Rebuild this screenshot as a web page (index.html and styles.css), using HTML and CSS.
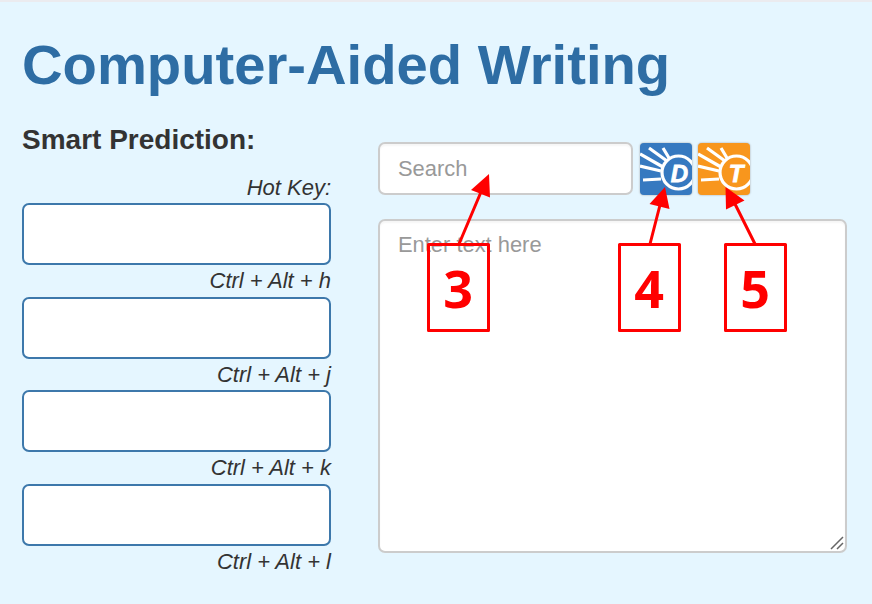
FILE: index.html
```html
<!DOCTYPE html>
<html lang="en">
<head>
<meta charset="utf-8">
<title>Computer-Aided Writing</title>
<link rel="stylesheet" href="styles.css">
</head>
<body>
<main class="page">
  <h1 class="title">Computer-Aided Writing</h1>
  <div class="columns">
    <section class="predictions">
      <h2 class="heading">Smart Prediction:</h2>
      <div class="hotkey first">Hot Key:</div>
      <div class="slot"></div>
      <div class="hotkey">Ctrl + Alt + h</div>
      <div class="slot"></div>
      <div class="hotkey">Ctrl + Alt + j</div>
      <div class="slot"></div>
      <div class="hotkey">Ctrl + Alt + k</div>
      <div class="slot"></div>
      <div class="hotkey">Ctrl + Alt + l</div>
    </section>
    <section class="editor">
      <div class="search-row">
        <div class="field search">Search</div>
        <svg class="lookup dictionary" viewBox="0 0 52 52">
          <g class="rays">
            <path d="M0 11 23 24M9 5 27 18M23 5 29 15M0 23 21 28M3 37 21 36"/>
            <circle cx="38.500" cy="29.500" r="16.500"/>
          </g>
          <text x="39.500" y="38.500">D</text>
        </svg>
        <svg class="lookup thesaurus" viewBox="0 0 52 52">
          <g class="rays">
            <path d="M0 11 23 24M9 5 27 18M23 5 29 15M0 23 21 28M3 37 21 36"/>
            <circle cx="38.500" cy="29.500" r="16.500"/>
          </g>
          <text x="38" y="38.500">T</text>
        </svg>
      </div>
      <div class="field writing">Enter text here
        <svg class="grip" viewBox="0 0 14 14"><path d="M1 13 13 1M7 13 13 7"/></svg>
      </div>
    </section>
  </div>
</main>
<svg class="callouts" viewBox="0 0 872 604">
  <path class="stroke" d="M428.5 244.5h60v86h-60zM619.5 244.5h60v86h-60zM725.5 244.5h60v86h-60z"/>
  <path class="stroke arrow" d="M459 244 481 192M650 244 660 205M755 244 735 204"/>
  <path class="head" d="M489 174 471 190 490 197.500ZM665 187 649.500 204 669.500 209ZM725.500 187 744.500 200.500 726 209.500Z"/>
  <text x="458" y="307.500">3</text>
  <text x="649" y="307.500">4</text>
  <text x="755" y="307.500">5</text>
</svg>
</body>
</html>
```
FILE: styles.css
```css
* {
  box-sizing: border-box;
}

body {
  margin: 0;
  width: 872px;
  height: 604px;
  overflow: hidden;
  background: #e5f6ff;
  color: #333;
  font-family: "Liberation Sans", Arial, sans-serif;
}

.page {
  height: 604px;
  padding: 31px 25px 0 22px;
  border-top: 2px solid #ebebef;
}

.title {
  margin: 0;
  height: 65px;
  color: #2e6da4;
  font-size: 56.2px;
  line-height: 64px;
  white-space: nowrap;
}

.columns {
  display: flex;
  gap: 47px;
}

.predictions {
  width: 309px;
  padding-top: 26px;
}

.heading {
  margin: 0;
  height: 32px;
  font-size: 28px;
  line-height: 32px;
}

.hotkey {
  height: 31.7px;
  font-size: 22px;
  font-style: italic;
  line-height: 31.7px;
  text-align: right;
}

.hotkey.first {
  height: 31px;
  margin-top: 16px;
  line-height: 31px;
}

.slot {
  height: 62px;
  border: 2px solid #3d78ab;
  border-radius: 7px;
  background: #fff;
}

.editor {
  width: 469px;
  padding-top: 44px;
}

.search-row {
  display: flex;
  align-items: center;
  gap: 6px;
  height: 53px;
}

.field {
  border: 2px solid #ccc;
  border-radius: 7px;
  background: #fff;
  box-shadow: inset 0 2px 2px rgba(0, 0, 0, 0.04);
  color: #999;
  font-size: 21.9px;
}

.search {
  width: 255px;
  height: 53px;
  padding-left: 18px;
  line-height: 50px;
}

.lookup {
  width: 52px;
  height: 52px;
  border-radius: 4px;
  box-shadow: 0 0 2px #999;
}

.dictionary {
  margin-left: 1px;
  background: #3679c0;
}

.thesaurus {
  background: #f8961d;
}

.rays {
  fill: none;
  stroke: #fff;
  stroke-width: 3.2;
}

.lookup text {
  fill: #fff;
  stroke: #fff;
  stroke-width: 0.8;
  font: italic 700 24px "Liberation Sans", Arial, sans-serif;
  text-anchor: middle;
}

.writing {
  position: relative;
  height: 334px;
  margin-top: 24px;
  padding: 11px 18px;
  line-height: 26px;
}

.grip {
  position: absolute;
  right: 1px;
  bottom: 1px;
  width: 14px;
  height: 14px;
  fill: none;
  stroke: #666;
  stroke-width: 1.5;
}

.callouts {
  position: absolute;
  top: 0;
  left: 0;
  width: 872px;
  height: 604px;
  fill: #f00;
}

.callouts text {
  font: 700 52px "Open Sans", sans-serif;
  text-anchor: middle;
}

.stroke {
  fill: none;
  stroke: #f00;
  stroke-width: 3;
  stroke-linejoin: round;
}
```
